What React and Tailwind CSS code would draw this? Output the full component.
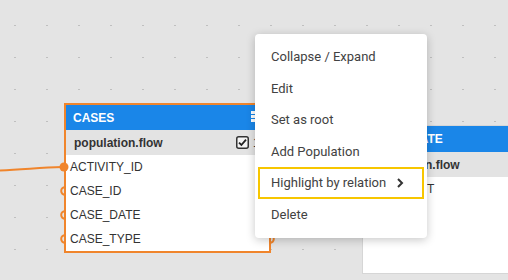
import React from 'react';

const ORANGE = '#f0852c';

const menuItems = [
    { label: 'Collapse / Expand' },
    { label: 'Edit' },
    { label: 'Set as root' },
    { label: 'Add Population' },
    { label: 'Highlight by relation', sub: true, active: true },
    { label: 'Delete' },
];

const casesColumns = ['ACTIVITY_ID', 'CASE_ID', 'CASE_DATE', 'CASE_TYPE'];

const LeftPort = ({ filled }) => (
    <svg className="absolute -left-[7px] top-1/2 -translate-y-1/2" width="10" height="10" viewBox="0 0 10 10">
        {filled ? (
            <circle cx="5" cy="5" r="4.5" fill={ORANGE} />
        ) : (
            <path d="M6 1.2 A3.8 3.8 0 0 0 6 8.8" fill="none" stroke={ORANGE} strokeWidth="2" />
        )}
    </svg>
);

const RightPort = () => (
    <svg className="absolute -right-[7px] top-1/2 -translate-y-1/2" width="10" height="10" viewBox="0 0 10 10">
        <path d="M4 1.2 A3.8 3.8 0 0 1 4 8.8" fill="none" stroke={ORANGE} strokeWidth="2" />
    </svg>
);

const Checkbox = () => (
    <svg width="13" height="13" viewBox="0 0 13 13">
        <rect x="0.75" y="0.75" width="11.5" height="11.5" rx="2" fill="#f4f4f4" stroke="#333" strokeWidth="1.5" />
        <path d="M3 6.6 L5.4 9 L10 3.6" fill="none" stroke="#222" strokeWidth="1.8" />
    </svg>
);

const App = () => {
    return (
        <div className="relative w-[508px] h-[280px] overflow-hidden bg-[#e4e4e4] font-['Roboto',sans-serif]">
            {/* Canvas dot grid */}
            <div className="absolute inset-0 grid grid-cols-[repeat(16,32px)] auto-rows-[32px]">
                {Array.from({ length: 144 }).map((_, i) => (
                    <div key={i}>
                        <div className="ml-[14px] mt-[25px] w-[2px] h-[1px] bg-[#bfbfbf]"></div>
                    </div>
                ))}
            </div>

            {/* Incoming relation line */}
            <svg className="absolute left-0 top-0" width="508" height="280">
                <path d="M0 170.5 C 25 169.5, 40 167.5, 62 167" fill="none" stroke={ORANGE} strokeWidth="2" />
            </svg>

            {/* Second table node (behind menu) */}
            <div className="absolute left-[362px] top-[125px] w-[200px] bg-white border border-[#d6d6d6] font-['Liberation_Sans',Arial,sans-serif]">
                <div className="h-[26px] bg-[#1a86e8] flex items-center pl-[8px] text-white text-[12px] font-bold">CASE_DATE</div>
                <div className="h-[25px] bg-[#e3e3e3] flex items-center pl-[8px] text-[#333] text-[12px] font-bold">population.flow</div>
                <div className="h-[96px]">
                    <div className="h-[24px] flex items-center pl-[4px] text-[#333] text-[12px]">CASE_UNIT</div>
                </div>
            </div>

            {/* CASES table node */}
            <div className="absolute left-[64px] top-[103px] w-[207px] border-2 border-[#f0852c] bg-white font-['Liberation_Sans',Arial,sans-serif]">
                <div className="relative h-[25px] bg-[#1a86e8] flex items-center pl-[7px] text-white text-[12px] font-bold">
                    CASES
                    <div className="absolute left-[185px] top-[6px] flex flex-col gap-[1px]">
                        <div className="w-[5px] h-[3px] bg-white"></div>
                        <div className="w-[5px] h-[3px] bg-white"></div>
                        <div className="w-[5px] h-[3px] bg-white"></div>
                    </div>
                </div>
                <div className="h-[25px] bg-[#e3e3e3] flex items-center pl-[8px] pr-[4px] text-[#333] text-[12px] font-bold">
                    <span className="flex-1">population.flow</span>
                    <span className="mr-[4px] flex items-center"><Checkbox /></span>
                    <span className="w-[12px] font-normal">1</span>
                </div>
                {casesColumns.map((col, i) => (
                    <div key={col} className="relative h-[24px] flex items-center pl-[4px] text-[#333] text-[12px]">
                        <LeftPort filled={i === 0} />
                        {col}
                        <RightPort />
                    </div>
                ))}
            </div>

            {/* Context menu */}
            <div className="absolute left-[255px] top-[34px] w-[172px] bg-white rounded-[4px] shadow-[0_2px_10px_rgba(0,0,0,0.22)] pt-[7px] pb-[7px]">
                {menuItems.map((item) => (
                    <div
                        key={item.label}
                        className={`mx-[3px] h-[31.6px] px-[11px] flex items-center justify-between border-2 text-[13px] text-[#424242] ${item.active ? 'border-[#f7c600]' : 'border-transparent'}`}
                    >
                        <span>{item.label}</span>
                        {item.sub && (
                            <svg width="10" height="12" viewBox="0 0 10 12" className="mr-[6px]">
                                <path d="M3 2 L7 6 L3 10" fill="none" stroke="#333" strokeWidth="2" />
                            </svg>
                        )}
                    </div>
                ))}
            </div>
        </div>
    );
};

export default App;
